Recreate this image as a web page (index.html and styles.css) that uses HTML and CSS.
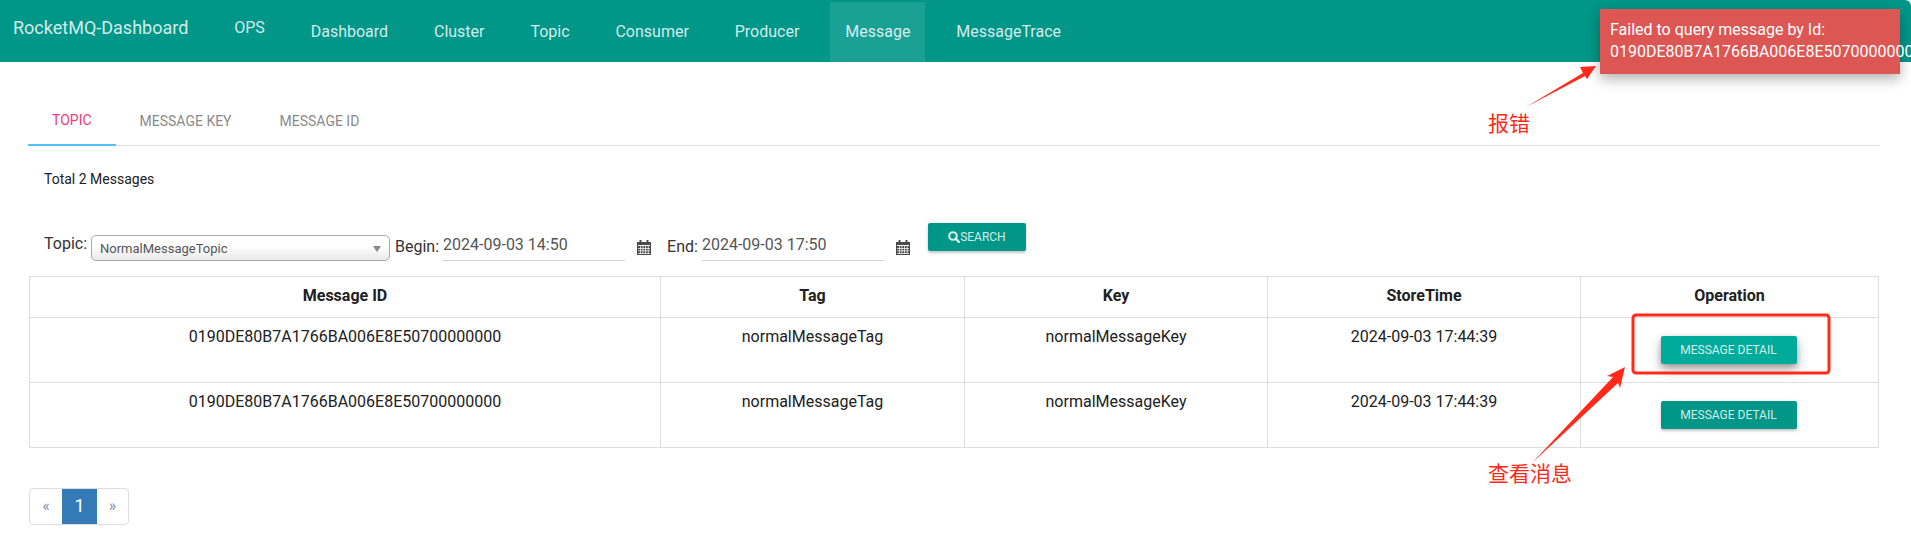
FILE: index.html
```html
<!DOCTYPE html>
<html lang="en">
<head>
  <meta charset="UTF-8" />
  <title>RocketMQ-Dashboard</title>
  <link rel="stylesheet" href="styles.css">
</head>
<body>

  <!-- NAV -->
  <div class="navbar">
    <a class="brand">RocketMQ-Dashboard</a>
    <a class="nav-item nav-ops">OPS</a>
    <a class="nav-item">Dashboard</a>
    <a class="nav-item">Cluster</a>
    <a class="nav-item">Topic</a>
    <a class="nav-item">Consumer</a>
    <a class="nav-item">Producer</a>
    <a class="nav-item active">Message</a>
    <a class="nav-item">MessageTrace</a>
  </div>

  <div class="content">
    <!-- TABS -->
    <div class="tabs">
      <a class="tab active">TOPIC</a>
      <a class="tab">MESSAGE KEY</a>
      <a class="tab">MESSAGE ID</a>
    </div>

    <p class="total">Total 2 Messages</p>

    <!-- FILTER -->
    <div class="filters">
      <label class="topic-label">Topic:</label>
      <div class="select">NormalMessageTopic</div>
      <label class="begin-label">Begin:</label>
      <input class="date-input" type="text" value="2024-09-03 14:50" />
      <svg class="cal" viewBox="0 0 14 16"><use href="#calendar"></use></svg>
      <label class="end-label">End:</label>
      <input class="date-input" type="text" value="2024-09-03 17:50" />
      <svg class="cal" viewBox="0 0 14 16"><use href="#calendar"></use></svg>
      <button class="btn btn-search">
        <svg class="search-icon" viewBox="0 0 12 12"><circle cx="5" cy="5" r="3.8" fill="none" stroke="currentColor" stroke-width="2"></circle><path d="M7.8 7.8 11 11" stroke="currentColor" stroke-width="2.4" stroke-linecap="round"></path></svg>SEARCH
      </button>
    </div>

    <table class="messages">
      <colgroup>
        <col class="col-id"><col class="col-tag"><col class="col-key"><col class="col-time"><col class="col-op">
      </colgroup>
      <thead>
        <tr>
          <th>Message ID</th>
          <th>Tag</th>
          <th>Key</th>
          <th>StoreTime</th>
          <th>Operation</th>
        </tr>
      </thead>
      <tbody>
        <tr>
          <td>0190DE80B7A1766BA006E8E50700000000</td>
          <td>normalMessageTag</td>
          <td>normalMessageKey</td>
          <td>2024-09-03 17:44:39</td>
          <td><button class="btn btn-detail hover">MESSAGE DETAIL</button></td>
        </tr>
        <tr>
          <td>0190DE80B7A1766BA006E8E50700000000</td>
          <td>normalMessageTag</td>
          <td>normalMessageKey</td>
          <td>2024-09-03 17:44:39</td>
          <td><button class="btn btn-detail">MESSAGE DETAIL</button></td>
        </tr>
      </tbody>
    </table>

    <!-- PAGER -->
    <div class="pager">
      <a class="page">«</a>
      <a class="page current">1</a>
      <a class="page">»</a>
    </div>
  </div>

  <!-- TOAST -->
  <div class="toast">Failed to query message by Id:<br>0190DE80B7A1766BA006E8E50700000000</div>

  <!-- ANNOTATIONS drawn over the screenshot -->
  <svg class="marks" viewBox="0 0 1911 557">
    <rect x="1633" y="315" width="196" height="58" rx="3" fill="none" stroke="#ff2a1a" stroke-width="3"></rect>
    <path d="M1526 107 1583 73 1580 67 1596 66 1587 79 1585 76Z" fill="#ff2a1a"></path>
    <path d="M1532 463 1613 377 1607 376 1625 367 1620 388 1618 383Z" fill="#ff2a1a"></path>
  </svg>
  <span class="note note-error">报错</span>
  <span class="note note-view">查看消息</span>

  <svg class="defs" width="0" height="0">
    <symbol id="calendar" viewBox="0 0 14 16">
      <path fill="#4a4a4a" d="M0 3h2.5V1h2v2h5V1h2v2H14v13H0z"></path>
      <path fill="#fff" d="M1 6h12v1H1zM1 9h12v.7H1zM1 11.5h12v.7H1zM1 14h12v.7H1z"></path>
      <path fill="#fff" d="M3 7h.7v8H3zM5.6 7h.7v8h-.7zM8.2 7h.7v8h-.7zM10.8 7h.7v8h-.7z"></path>
    </symbol>
  </svg>

</body>
</html>
```

FILE: styles.css
```css
html, body {
  height: 100%;
}
body {
  margin: 0;
  position: relative;
  overflow: hidden;
  background: #fff;
  font-family: Roboto, Arial, sans-serif;
  font-size: 16px;
  color: #212121;
}
.navbar {
  display: flex;
  align-items: flex-end;
  gap: 15.9px;
  height: 62px;
  padding-left: 13px;
  background: #009688;
  border-top-right-radius: 6px;
  color: rgba(255, 255, 255, .84);
}
.brand {
  align-self: flex-start;
  margin-top: 17px;
  margin-right: 30px;
  font-size: 18px;
  line-height: 22px;
}
.nav-item {
  height: 60px;
  padding: 0 15px;
  line-height: 60px;
}
.nav-ops {
  margin-left: -15px;
  line-height: 52px;
}
.nav-item.active {
  background: rgba(255, 255, 255, .1);
}
.content {
  padding: 0 31px 0 29px;
}
.tabs {
  display: flex;
  height: 83px;
  margin-left: -1px;
  align-items: flex-end;
  border-bottom: 1px solid #e0e0e0;
}
.tab {
  padding: 0 24px;
  height: 48px;
  line-height: 48px;
  font-size: 14px;
  color: #8a8a8a;
}
.tab.active {
  color: #ec407a;
  border-bottom: 2px solid #4fc3f7;
  margin-bottom: -1px;
}
.total {
  margin: 24px 0 0 15px;
  font-size: 14px;
  line-height: 18px;
}
.filters {
  display: flex;
  align-items: flex-start;
  height: 53px;
  margin-top: 35px;
  margin-left: 15px;
}
.topic-label {
  margin-top: 12px;
  margin-right: 4px;
  line-height: 18px;
  color: #333;
}
.select {
  position: relative;
  box-sizing: border-box;
  width: 299px;
  height: 26px;
  margin-top: 12px;
  padding-left: 8px;
  border: 1px solid #aaa;
  border-radius: 5px;
  background: linear-gradient(#fff 40%, #e9e9e9);
  font-size: 13px;
  line-height: 25px;
  color: #555;
}
.select::after {
  content: "";
  position: absolute;
  right: 8px;
  top: 10px;
  border: 4px solid transparent;
  border-top: 6px solid #888;
  border-bottom: 0;
}
.begin-label, .end-label {
  margin-top: 15px;
  line-height: 18px;
  color: #333;
}
.begin-label {
  margin-left: 5px;
  margin-right: 4px;
}
.end-label {
  margin-right: 4px;
}
.date-input {
  box-sizing: border-box;
  width: 182px;
  height: 38px;
  padding: 6px 0 0;
  border: 0;
  border-bottom: 1px solid #d2d2d2;
  outline: none;
  font-family: Roboto, Arial, sans-serif;
  font-size: 16px;
  line-height: 24px;
  color: #555;
}
.cal {
  width: 14px;
  height: 16px;
  margin: 16px 16px 0 12px;
}
.cal:last-of-type {
  margin-right: 0;
}
.btn {
  border: 0;
  border-radius: 2px;
  background: #009688;
  color: rgba(255, 255, 255, .84);
  font-family: Roboto, Arial, sans-serif;
  font-size: 12px;
  box-shadow: 0 2px 2px rgba(0, 0, 0, .14), 0 1px 5px rgba(0, 0, 0, .12);
}
.btn-search {
  display: flex;
  align-items: center;
  justify-content: center;
  width: 98px;
  height: 28px;
  padding: 0;
  margin-left: 18px;
}
.search-icon {
  width: 12px;
  height: 12px;
}
.messages {
  width: 1849px;
  table-layout: fixed;
  border-collapse: collapse;
  font-size: 16px;
}
.col-id { width: 631px; }
.col-tag { width: 304px; }
.col-key { width: 303px; }
.col-time { width: 313px; }
.col-op { width: 298px; }
.messages th, .messages td {
  border: 1px solid #ddd;
  text-align: center;
  vertical-align: top;
  padding: 8px;
  line-height: 22px;
}
.messages th {
  height: 24px;
  font-weight: 700;
}
.messages td {
  height: 48px;
}
.btn-detail {
  width: 136px;
  height: 28px;
  margin: 10px 2px 0 0;
  padding: 0;
}
.btn-detail.hover {
  background: #00ab9b;
  box-shadow: 0 6px 12px rgba(0, 0, 0, .3), 0 2px 5px rgba(0, 0, 0, .2);
}
.pager {
  display: inline-flex;
  margin-top: 40px;
  border: 1px solid #ddd;
  border-radius: 4px;
}
.page {
  box-sizing: border-box;
  width: 32px;
  height: 35px;
  text-align: center;
  line-height: 34px;
  font-size: 16px;
  color: #8090a8;
}
.page:last-child {
  width: 31px;
}
.page.current {
  width: 35px;
  background: #337ab7;
  color: #fff;
  font-size: 18px;
}
.toast {
  position: absolute;
  top: 9px;
  left: 1600px;
  box-sizing: border-box;
  width: 300px;
  height: 65px;
  padding: 10px;
  background: #dc5753;
  color: #fff;
  font-size: 16px;
  line-height: 22px;
  white-space: nowrap;
  box-shadow: 0 5px 12px rgba(0, 0, 0, .3);
}
.marks {
  position: absolute;
  top: 0;
  left: 0;
  width: 1911px;
  height: 557px;
  pointer-events: none;
}
.note {
  position: absolute;
  font-family: "Noto Sans CJK SC", sans-serif;
  font-size: 21px;
  line-height: 24px;
  color: #ff2a1a;
}
.note-error {
  left: 1488px;
  top: 110px;
}
.note-view {
  left: 1488px;
  top: 460px;
}
.defs {
  position: absolute;
}
```
